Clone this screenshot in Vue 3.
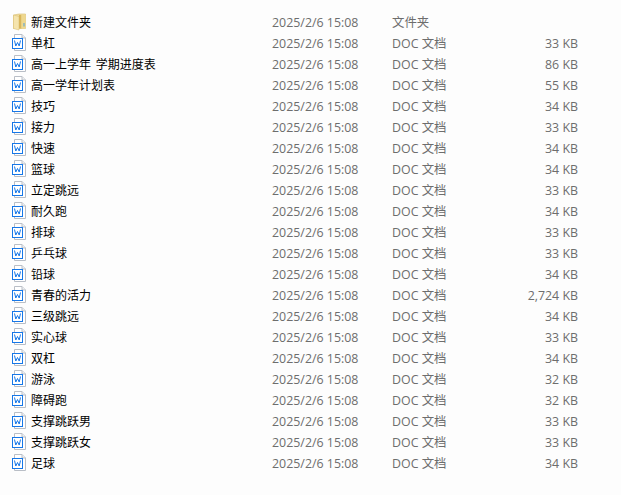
<script setup>
const names = ['单杠','高一上学年 学期进度表','高一学年计划表','技巧','接力','快速','篮球','立定跳远','耐久跑','排球','乒乓球','铅球','青春的活力','三级跳远','实心球','双杠','游泳','障碍跑','支撑跳跃男','支撑跳跃女','足球']
const sizes = ['33 KB','86 KB','55 KB','34 KB','33 KB','34 KB','34 KB','33 KB','34 KB','33 KB','33 KB','34 KB','2,724 KB','34 KB','33 KB','34 KB','32 KB','32 KB','33 KB','33 KB','34 KB']
const files = names.map((name, i) => ({ name, size: sizes[i] }))
</script>

<template>
  <div class="list">
    <div class="row">
      <svg class="icon" viewBox="0 0 16 17" width="16" height="17">
        <path d="M0.5 2 L6 1 L12.5 1 L12.5 15.5 L0.5 15.5 Z" fill="#f0dc9e" stroke="#d9bd6e" stroke-width="0.6" />
        <path d="M0.5 2 L6 3.5 L6 17 L0.5 15.5 Z" fill="#f5e4ad" stroke="#dcc278" stroke-width="0.6" />
        <path d="M6 2 L8.5 2 L8.5 15.5 L6 15.5 Z" fill="#d9b65c" />
        <path d="M8.5 1.5 L12.5 1.5 L12.5 15.5 L8.5 15.5 Z" fill="#efd88f" />
        <rect x="10.5" y="10" width="1" height="3.5" fill="#4f9fe0" />
      </svg>
      <span class="name">新建文件夹</span>
      <span class="date">2025/2/6 15:08</span>
      <span class="type">文件夹</span>
      <span class="size"></span>
    </div>
    <div v-for="f in files" :key="f.name" class="row">
      <svg class="icon" viewBox="0 0 16 17" width="16" height="17">
        <path d="M1.5 0.5 H9 L12.5 4 V16.5 H1.5 Z" fill="#fff" stroke="#b9bec6" />
        <path d="M9 0.5 V4 H12.5" fill="#eef0f3" stroke="#b9bec6" />
        <rect x="-0.5" y="4.5" width="10" height="10" fill="#fff" stroke="#1677e8" />
        <path d="M1.5 6.5 L2.8 12 L4.5 8.5 L6.2 12 L7.5 6.5" fill="none" stroke="#1677e8" stroke-width="1" />
      </svg>
      <span class="name">{{ f.name }}</span>
      <span class="date">2025/2/6 15:08</span>
      <span class="type">DOC 文档</span>
      <span class="size">{{ f.size }}</span>
    </div>
  </div>
</template>

<style scoped>
.list {
  box-sizing: border-box;
  width: 621px;
  height: 495px;
  padding: 11px 0 0 13px;
  background: #fdfdfd;
  font-family: "Noto Sans CJK SC", "Noto Sans", sans-serif;
  font-size: 12px;
  overflow: hidden;
}
.row {
  display: flex;
  align-items: center;
  height: 21px;
  line-height: 21px;
  white-space: nowrap;
}
.icon {
  flex: none;
  overflow: visible;
}
.name {
  width: 241px;
  margin-left: 2px;
  color: #000;
  word-spacing: 2px;
}
.date,
.type,
.size {
  padding-top: 2px;
  color: #6d6d6d;
  font-family: "Open Sans", "Noto Sans CJK SC", sans-serif;
  font-size: 12.4px;
}
.date {
  width: 120px;
}
.type {
  width: 120px;
}
.size {
  width: 66px;
  text-align: right;
}
</style>
